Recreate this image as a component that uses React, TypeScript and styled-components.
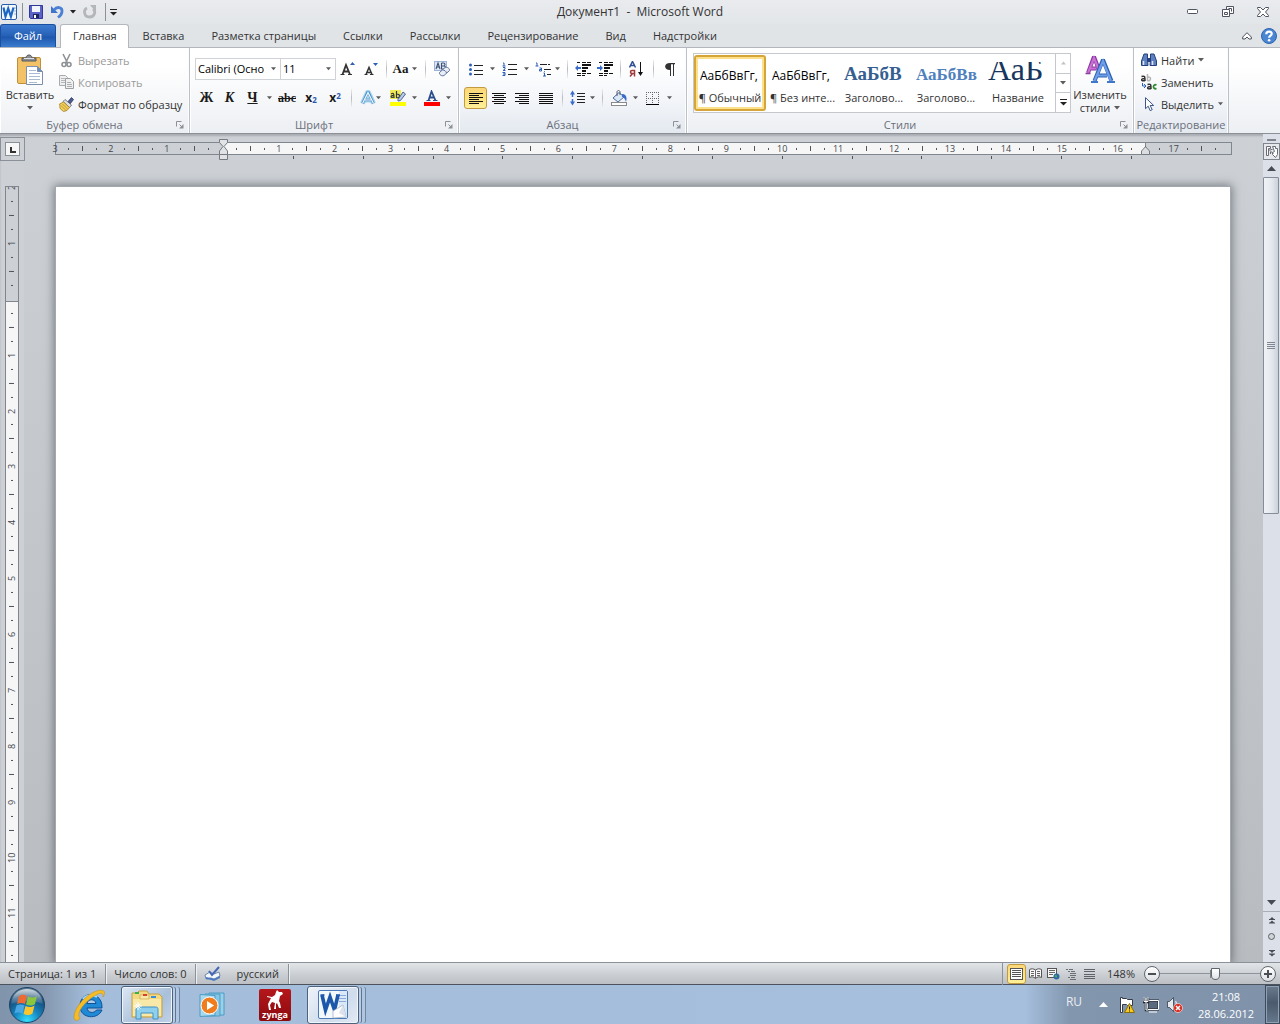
import React from "react";
import styled, { createGlobalStyle, css } from "styled-components";

const GlobalStyle = createGlobalStyle`
  * { box-sizing: border-box; }
  html, body { margin: 0; height: 100%; overflow: hidden; }
  body, button, select, input, textarea {
    font-family: "Open Sans", "Noto Sans", sans-serif;
    font-size: 11px;
    color: #333;
  }
  button {
    border: 0; padding: 0; margin: 0; background: none; cursor: default;
    display: flex; align-items: center; justify-content: center; flex: none;
  }
  svg { display: block; flex: none; }
`;

/* ---------- window frame ---------- */

const Window = styled.div`
  display: flex;
  flex-direction: column;
  height: 100vh;
  background: #cdd1d6;
`;

const TitleBar = styled.header`
  display: grid;
  grid-template-columns: 1fr auto 1fr;
  align-items: center;
  height: 24px;
  background: linear-gradient(#e9ebee, #e3e6e9);
`;

const Title = styled.h1`
  margin: 0;
  font-size: 12px;
  font-weight: 400;
  line-height: 16px;
  white-space: pre;
`;

const QuickAccess = styled.div`
  display: flex;
  align-items: center;
`;

const WindowButtons = styled.div`
  display: flex;
  justify-content: flex-end;
`;

const Tool = styled.button<{ $w?: number }>`
  width: ${(p) => p.$w ?? 24}px;
  height: 22px;
`;

const Divider = styled.span<{ $w?: number; $dark?: boolean }>`
  flex: none;
  width: ${(p) => p.$w ?? 8}px;
  height: 18px;
  background: linear-gradient(${(p) => (p.$dark ? "#8d9299, #8d9299" : "#eceef0, #b5bac1, #eceef0")}) center / 1px 100% no-repeat;
`;

const TabRow = styled.nav`
  display: flex;
  align-items: flex-end;
  height: 24px;
  background: #e0e4e7;
  border-bottom: 1px solid #b4b8be;
`;

const TabButton = styled.button`
  height: 23px;
  padding: 0 13px 0 14px;
  line-height: 16px;
`;

const FileTab = styled(TabButton)`
  width: 56px;
  margin-right: 4px;
  padding: 0;
  color: #fff;
  border: 1px solid #1b4f9f;
  border-bottom: 0;
  border-radius: 3px 3px 0 0;
  background: linear-gradient(#3d7bd0, #2560b5 50%, #1e57ad 55%, #3a7dd0);
`;

const ActiveTab = styled(TabButton)`
  height: 24px;
  margin-bottom: -1px;
  padding: 0 11px 2px 12px;
  background: #fff;
  border: 1px solid #b4b8be;
  border-bottom: 0;
  border-radius: 3px 3px 0 0;
`;

const TabActions = styled.div`
  display: flex;
  margin-left: auto;
`;

/* ---------- ribbon ---------- */

const Ribbon = styled.div`
  display: flex;
  flex: none;
  height: 86px;
  background: linear-gradient(#fff 20%, #f6f7f9 60%, #eceff3);
  border-bottom: 1px solid #8b9097;
`;

const Group = styled.section<{ $w: number; $tinted?: boolean }>`
  display: flex;
  flex-direction: column;
  flex: none;
  width: ${(p) => p.$w}px;
  border-right: 1px solid #bcc1c8;
  box-shadow: inset -1px 0 #fbfcfd, inset 1px 0 #fff;
  ${(p) => p.$tinted && css`background: linear-gradient(#fff 20%, #f3f5f9 60%, #e4e9f0);`}
`;

const GroupBody = styled.div<{ $left?: number }>`
  display: flex;
  flex: 1;
  gap: 4px;
  padding-left: ${(p) => p.$left ?? 5}px;
`;

const GroupFooter = styled.div`
  display: grid;
  grid-template-columns: 1fr 20px;
  align-items: center;
  height: 16px;
`;

const GroupTitle = styled.h2<{ $wide?: boolean }>`
  grid-column: ${(p) => (p.$wide ? "1 / 3" : "1")};
  margin: 0;
  font-size: 11px;
  font-weight: 400;
  line-height: 16px;
  text-align: center;
  color: #6b6f7a;
  white-space: nowrap;
`;

const Launcher = styled.button`
  justify-self: end;
  width: 14px;
  height: 14px;
  margin-right: 2px;
`;

const Rows = styled.div`
  display: flex;
  flex-direction: column;
  gap: 7px;
  padding-top: 10px;
`;

const Row = styled.div`
  display: flex;
  align-items: center;
  height: 22px;
`;

const SmallColumn = styled.div`
  display: flex;
  flex-direction: column;
  padding-top: 1px;
`;

const SmallButton = styled.button`
  height: 22px;
  justify-content: flex-start;
  gap: 4px;
  white-space: nowrap;
  &:disabled { color: #9a9a9a; }
`;

const BigButton = styled.button`
  flex-direction: column;
  justify-content: flex-start;
  width: 50px;
  padding-top: 4px;
  line-height: 13px;
  white-space: nowrap;
`;

const BigIcon = styled.span`
  display: flex;
  align-items: center;
  height: 36px;
`;

const Inline = styled.span`
  display: flex;
  align-items: center;
  gap: 4px;
  min-height: 13px;
`;

const Combo = styled.div<{ $w: number }>`
  position: relative;
  width: ${(p) => p.$w}px;
  height: 22px;
  border: 1px solid #cfd2d7;
  background: #fff;
  & + & { margin-left: -1px; }
  svg { position: absolute; right: 4px; top: 8px; pointer-events: none; }
`;

const Select = styled.select`
  appearance: none;
  width: 100%;
  height: 20px;
  padding: 0 0 2px 2px;
  border: 0;
  background: transparent;
  color: #000;
`;

const ToggleTool = styled(Tool)<{ $on?: boolean }>`
  ${(p) => p.$on && css`
    border: 1px solid #c29b3f;
    border-radius: 3px;
    background: linear-gradient(#fbd77a, #fde27f 50%, #fff09a);
  `}
`;

const Glyph = styled.span<{ $italic?: boolean; $line?: string; $size?: number }>`
  font-family: "Liberation Serif", serif;
  font-size: ${(p) => p.$size ?? 14}px;
  font-weight: 700;
  line-height: 16px;
  color: #1a1a1a;
  font-style: ${(p) => (p.$italic ? "italic" : "normal")};
  text-decoration: ${(p) => p.$line ?? "none"};
`;

const Script = styled.span<{ $up?: boolean }>`
  display: flex;
  align-items: ${(p) => (p.$up ? "flex-start" : "flex-end")};
  font: 700 12px/12px "Open Sans", sans-serif;
  color: #1a1a1a;
  small { font-size: 8px; line-height: 8px; color: #2a56b0; }
`;

const Gallery = styled.div`
  display: flex;
  width: 378px;
  height: 60px;
  margin-top: 5px;
  border: 1px solid #c5c9ce;
  background: #fff;
`;

const StyleCard = styled.button<{ $on?: boolean }>`
  flex-direction: column;
  justify-content: flex-end;
  align-items: stretch;
  width: 72px;
  height: 56px;
  margin-top: 1px;
  padding: 0 2px 1px;
  border: 2px solid transparent;
  ${(p) => p.$on && css`
    border-color: #d6a53a;
    border-radius: 3px;
    box-shadow: inset 0 0 0 2px #fce08a;
  `}
`;

const Preview = styled.span`
  display: block;
  height: 28px;
  margin-left: 2px;
  overflow: hidden;
  white-space: nowrap;
  text-align: left;
  font-size: 12px;
  line-height: 28px;
`;

const Sample = styled.span<{ $size: number; $color: string; $serif?: boolean; $bold?: boolean }>`
  font-family: ${(p) => (p.$serif ? '"Liberation Serif", serif' : '"Open Sans", sans-serif')};
  font-size: ${(p) => p.$size}px;
  font-weight: ${(p) => (p.$bold ? 700 : 400)};
  line-height: 0;
  color: ${(p) => p.$color};
`;

const StyleName = styled.span`
  line-height: 16px;
  height: 18px;
  text-align: center;
  white-space: nowrap;
`;

const GalleryScroll = styled.div`
  display: flex;
  flex-direction: column;
  margin-left: auto;
  width: 15px;
  border-left: 1px solid #c5c9ce;
`;

const GalleryButton = styled.button`
  flex: 1;
  & + & { border-top: 1px solid #c5c9ce; }
`;

/* ---------- workspace ---------- */

const Workspace = styled.main`
  display: flex;
  flex: 1;
  min-height: 0;
  box-shadow: inset 0 2px 2px #a9adb3;
`;

const LeftRail = styled.div`
  display: flex;
  flex-direction: column;
  width: 24px;
  padding-top: 3px;
`;

const TabStop = styled.button`
  width: 25px;
  height: 24px;
  border: 1px solid #8a9097;
  background: #cdd1d6;
  span { display: flex; border: 1px solid #8a9097; background: #f7f7f8; padding: 4px 3px 2px 4px; }
`;

const VRuler = styled.div`
  display: flex;
  flex-direction: column;
  flex: 1;
  width: 14px;
  min-height: 0;
  margin: 25px 0 0 5px;
  border: 1px solid #7f868e;
  border-bottom: 0;
  background: linear-gradient(#cdd1d6 114px, #7f868e 114px, #7f868e 115px, #f6f6f7 115px);
  overflow: hidden;
`;

const VMarks = styled.div`
  display: flex;
  flex-direction: column;
  flex: 1;
  margin-top: -7px;
`;

const HMarks = styled.div`
  position: absolute;
  inset: 0 8px 0 -8px;
  display: flex;
`;

const Mark = styled.span<{ $turn?: boolean }>`
  display: flex;
  flex: 1 1 0;
  min-width: 0;
  min-height: 0;
  align-items: center;
  justify-content: center;
  font-size: 9px;
  line-height: 10px;
  color: #42464c;
  ${(p) => p.$turn && css`
    writing-mode: vertical-rl;
    transform: rotate(180deg);
  `}
`;

const Tick = styled.i<{ $long?: boolean; $turn?: boolean }>`
  flex: none;
  background: #50545a;
  width: ${(p) => (p.$turn ? (p.$long ? 5 : 2) : 1)}px;
  height: ${(p) => (p.$turn ? 1 : p.$long ? 5 : 2)}px;
`;

const Center = styled.div`
  display: flex;
  flex-direction: column;
  flex: 1;
  min-width: 0;
  overflow: hidden;
  background: linear-gradient(rgba(205, 209, 214, 0), #b8bbbf);
`;

const HRuler = styled.div`
  position: relative;
  display: flex;
  flex: none;
  height: 13px;
  margin: 8px 31px 0;
  border: 1px solid #7f868e;
`;

const TextSpan = styled.div`
  flex: 1;
  margin: 0 85px 0 167px;
  background: #f6f6f7;
  border-right: 1px solid #7f868e;
`;

const LeftIndent = styled.div`
  position: absolute;
  left: 163px;
  top: -4px;
`;

const RightIndent = styled.div`
  position: absolute;
  right: 81px;
  top: 3px;
`;

const TabStops = styled.div`
  display: flex;
  flex: none;
  height: 3px;
  margin: 1px 131px 0 200px;
  i { flex: 1; border-right: 1px solid #50545a; }
`;

const Page = styled.textarea`
  flex: 1;
  margin: 28px 33px 0 32px;
  padding: 96px 84px 0 168px;
  border: 0;
  outline: 0;
  resize: none;
  background: #fff;
  box-shadow: 0 0 0 1px #a3a8ae, 0 0 9px 2px rgba(60, 66, 74, 0.6);
`;

const ScrollRail = styled.div`
  display: flex;
  flex-direction: column;
  width: 17px;
  padding-top: 5px;
  background: #dce1e9;
`;

const SplitHandle = styled.div`
  height: 3px;
  margin: 0 4px 1px;
  border-top: 2px solid #7f868e;
`;

const RailButton = styled.button<{ $boxed?: boolean; $line?: boolean }>`
  width: 17px;
  height: 17px;
  ${(p) => p.$boxed && css`border: 1px solid #7f868e; background: #e6e8eb;`}
  ${(p) => p.$line && css`border-top: 1px solid #a9afb8;`}
`;

const Track = styled.div`
  flex: 1;
`;

const Thumb = styled.div`
  display: flex;
  align-items: center;
  justify-content: center;
  width: 16px;
  height: 47%;
  border: 1px solid #858d98;
  border-radius: 1px;
  background: linear-gradient(90deg, #f0f2f5, #e6eaf0 50%, #ccd1da);
`;

/* ---------- status bar ---------- */

const StatusBar = styled.footer`
  display: flex;
  align-items: center;
  flex: none;
  height: 23px;
  border-top: 1px solid #8b9199;
  border-bottom: 1px solid #4c535c;
  background: linear-gradient(#e2e5e8, #c9cdd1 60%, #bcc0c5);
`;

const StatusItem = styled.button`
  height: 20px;
  padding: 0 9px 1px 8px;
  border-right: 1px solid #8b9199;
  box-shadow: 1px 0 #eef0f2;
`;

const ViewButtons = styled.div`
  display: flex;
  align-items: center;
  margin-left: auto;
  padding-left: 4px;
  border-left: 1px solid #8b9199;
`;

const ViewButton = styled(ToggleTool)`
  height: 20px;
  margin: 1px 0;
`;

const ZoomButton = styled.button`
  width: 16px;
  height: 16px;
  border-radius: 8px;
  border: 1px solid #60666e;
  background: linear-gradient(#fff, #dcdfe3);
`;

const ZoomGroup = styled.div`
  display: flex;
  align-items: center;
  padding-right: 4px;
`;

const ZoomValue = styled.button`
  width: 46px;
`;

const ZoomSlider = styled.input`
  appearance: none;
  width: 100px;
  height: 16px;
  margin: 0;
  background:
    linear-gradient(#7d838b, #7d838b) center / 1px 8px no-repeat,
    linear-gradient(#8d939b, #8d939b) center / 100% 1px no-repeat;
  &::-webkit-slider-thumb {
    appearance: none;
    width: 9px;
    height: 12px;
    border: 1px solid #60666e;
    border-radius: 1px 1px 5px 5px;
    background: linear-gradient(#fff, #e0e3e7);
  }
`;

/* ---------- taskbar ---------- */

const Taskbar = styled.nav`
  display: flex;
  flex: none;
  align-items: stretch;
  height: 39px;
  background: linear-gradient(90deg, #8094ab 0, #8598b0 45px, #a3bddb 90px, #a6bfdd calc(100% - 255px), #8296ae calc(100% - 210px), #7f92aa);
`;

const StartButton = styled.button`
  width: 54px;
  margin-right: 5px;
`;

const TaskList = styled.div`
  display: flex;
  flex: 1;
  gap: 2px;
`;

const TaskButton = styled.button<{ $open?: boolean; $active?: boolean }>`
  width: 60px;
  ${(p) => p.$open && css`
    justify-content: flex-start;
    & > span {
      display: flex;
      align-items: center;
      justify-content: center;
      width: 52px;
      height: 38px;
      border: 1px solid #4d627c;
      border-radius: 3px;
      background: ${p.$active ? "linear-gradient(135deg, #eef3f9, #cfdcec 60%, #e2eaf4)" : "linear-gradient(135deg, #dce7f3, #a9bfda 60%, #c2d2e6)"};
      box-shadow: inset 0 0 0 1px #f0f5fb, 3px 0 0 -1px #b9cce3, 4px 0 0 -1px #5e7592, 7px 0 0 -1px #b0c6e0, 8px 0 0 -1px #6f87a5;
    }
  `}
`;

const Tray = styled.div`
  display: flex;
  align-items: center;
`;

const Language = styled.button`
  width: 34px;
  padding-bottom: 6px;
  font-size: 12px;
  color: #e8edf3;
`;

const Clock = styled.time`
  width: 78px;
  color: #fff;
  text-align: center;
  line-height: 17px;
`;

const ShowDesktop = styled.button`
  align-self: stretch;
  width: 15px;
  border: 1px solid #3c4a5b;
  background: linear-gradient(#6b7b8e, #4b5a6c 45%, #66788d);
  box-shadow: inset 0 0 0 1px #8fa0b4;
`;

/* ---------- icons ---------- */

const Arrow = ({ color = "#5c5c5c", w = 6 }: { color?: string; w?: number }) => (
  <svg width={w} height="4" viewBox="0 0 6 4"><path d="M0 0h6L3 3.6z" fill={color} /></svg>
);

const WordSmall = () => (
  <svg width="18" height="18" viewBox="0 0 18 18">
    <rect x="1.5" y="1.5" width="15" height="15" rx="1.5" fill="#f3f8fd" stroke="#2a5ca8" />
    <path d="M14 5h2M14 8h2M14 11h2" stroke="#9bb7dd" />
    <path d="M3.500 4.500l2 9 2.700-8 2.700 8 2.600-9" fill="none" stroke="#1c66c4" strokeWidth="2.200" />
  </svg>
);

const Save = () => (
  <svg width="14" height="14" viewBox="0 0 14 14">
    <path d="M.5.5h13v13h-12l-1-1z" fill="#5a63c8" stroke="#31389a" />
    <path d="M3 1h8v6H3z" fill="#f2f5fb" /><path d="M4 9h6v4H4z" fill="#20265c" /><path d="M5 10h2v3H5z" fill="#fff" />
  </svg>
);

const Undo = () => (
  <svg width="14" height="14" viewBox="0 0 14 14">
    <path d="M1 1v7h7z" fill="#3f74cc" />
    <path d="M4 5c3-4 8.500-3 8 1.500 0 2.500-2 4.500-4 6" fill="none" stroke="#4b80d4" strokeWidth="2.800" />
  </svg>
);

const Redo = () => (
  <svg width="14" height="14" viewBox="0 0 14 14">
    <path d="M4 3C0 5 1 12 6.500 12S13 6 10 4" fill="none" stroke="#b3b6ba" strokeWidth="2.800" />
    <path d="M7 0h6v7z" fill="#b3b6ba" />
  </svg>
);

const Customize = () => (
  <svg width="7" height="7" viewBox="0 0 7 7"><path d="M0 .5h7" stroke="#222" /><path d="M0 3h7L3.500 6.500z" fill="#222" /></svg>
);

const Minimize = () => (
  <svg width="12" height="6" viewBox="0 0 12 6"><rect x=".5" y=".5" width="10" height="4" rx="1" fill="#fff" stroke="#4f5362" /></svg>
);

const Restore = () => (
  <svg width="12" height="12" viewBox="0 0 12 12">
    <path d="M4.500 .5h7v7h-7z" fill="#fff" stroke="#4f5362" /><path d="M.5 3.500h7v7h-7z" fill="#fff" stroke="#4f5362" />
    <path d="M2.500 6.500h3v2h-3z" fill="none" stroke="#4f5362" /><path d="M6.500 2.500h3v3" fill="none" stroke="#4f5362" />
  </svg>
);

const Close = () => (
  <svg width="12" height="10" viewBox="0 0 12 10">
    <path d="M.5.5h3L6 3 8.500.5h3v1L8.500 5l3 3.500v1h-3L6 7 3.500 9.500h-3v-1L3.500 5l-3-3.500z" fill="#fff" stroke="#4f5362" />
  </svg>
);

const Collapse = () => (
  <svg width="10" height="8" viewBox="0 0 10 8"><path d="M5 .7L9.300 5v2H7L5 5 3 7H.7V5z" fill="#fff" stroke="#4f5362" /></svg>
);

const Help = () => (
  <svg width="16" height="16" viewBox="0 0 16 16">
    <circle cx="8" cy="8" r="7.500" fill="#4a86d2" stroke="#2f64b0" />
    <path d="M5.300 6.200C5.300 2.700 10.900 2.900 10.700 6c-.1 1.700-2.600 1.700-2.600 3.800" fill="none" stroke="#fff" strokeWidth="2.200" />
    <circle cx="8.100" cy="12.200" r="1.300" fill="#fff" />
  </svg>
);

const Paste = () => (
  <svg width="28" height="32" viewBox="0 0 28 32">
    <rect x="1.500" y="3.500" width="23" height="26" rx="1.500" fill="#f3c267" stroke="#c08f3c" />
    <path d="M6 7V4h4c0-4 6-4 6 0h4v3z" fill="#8b8f94" stroke="#55595e" /><path d="M8 4.500h10" stroke="#dfe2e5" />
    <path d="M10.500 12.500h11l5 5v13h-16z" fill="#fff" stroke="#7c90ad" /><path d="M21.500 12.500v5h5z" fill="#6d8fc0" stroke="#7c90ad" />
    <path d="M13 16.500h7M13 19.500h11M13 22.500h11M13 25.500h11M13 28.500h8" stroke="#a9bad3" />
  </svg>
);

const Cut = () => (
  <svg width="15" height="15" viewBox="0 0 15 15">
    <path d="M4 1l4.500 9M11 1L6.500 10" stroke="#8e9195" strokeWidth="1.600" />
    <circle cx="5" cy="11.500" r="2" fill="none" stroke="#8e9195" strokeWidth="1.600" /><circle cx="10" cy="11.500" r="2" fill="none" stroke="#8e9195" strokeWidth="1.600" />
  </svg>
);

const Copy = () => (
  <svg width="15" height="14" viewBox="0 0 15 14">
    <path d="M.5.5h6l2 2v8h-8z" fill="#eee" stroke="#a9abae" /><path d="M2 3.500h4M2 5.500h4M2 7.500h4" stroke="#b5b7ba" />
    <path d="M6.500 3.500h5l3 3v7h-8z" fill="#f0f0f0" stroke="#9da0a3" /><path d="M8 7.500h4M8 9.500h5M8 11.500h5" stroke="#abadb0" />
  </svg>
);

const Brush = () => (
  <svg width="15" height="15" viewBox="0 0 15 15">
    <path d="M9 4.500L12.500 .500l2 2L11 7z" fill="#4c5a8c" stroke="#2f3b66" strokeWidth=".8" />
    <path d="M6 2.500l6.500 5.500-2 2.500-6.500-6z" fill="#dde0e4" stroke="#55595f" strokeWidth=".8" />
    <path d="M4.500 5L.5 7c1 1.500-.5 3 1 5l3 2.500 3.500-1 2.500-3z" fill="#f0cf5a" stroke="#a67e24" strokeWidth=".8" />
    <path d="M2 8.500l5 5M3.500 7l5 5" stroke="#b58d2e" strokeWidth=".8" />
  </svg>
);

const LauncherIcon = () => (
  <svg width="8" height="8" viewBox="0 0 8 8"><path d="M.5 5.500v-5h5M3.500 3.500l3 3" fill="none" stroke="#8c9096" /><path d="M7.500 3v4.500H3z" fill="#8c9096" /></svg>
);

const Eraser = () => (
  <svg width="17" height="16" viewBox="0 0 17 16">
    <rect x=".5" y=".5" width="12" height="9" fill="#dce8f8" stroke="#9db4d8" />
    <path d="M2 8l2-6 2 6M2.700 6h2.600M7.500 2v6h2.500c2 0 2-3 0-3H7.500M7.500 2H9.500c2 0 2 3 0 3" fill="none" stroke="#40506e" strokeWidth="1.100" />
    <path d="M5.500 11.500l5.500-5c2-1 5 1 4.500 3l-5.500 5c-2.500 1-5-1-4.500-3z" fill="#e9eef6" stroke="#5b729b" /><path d="M8.500 9c2 0 3.500 1 4 3" fill="none" stroke="#5b729b" />
  </svg>
);

const GlowA = () => (
  <svg width="16" height="16" viewBox="0 0 16 16">
    <path d="M2.500 13.500L7.500 2.500h1l5 11M4.500 10h7" fill="none" stroke="#a8d4ef" strokeWidth="5" strokeLinejoin="round" />
    <path d="M2.500 13.500L7.500 2.500h1l5 11M5 10h6" fill="none" stroke="#4d90c8" strokeWidth="2.600" /><path d="M2.500 13.500L8 2.500l5.500 11M5 10h6" fill="none" stroke="#f2fafe" strokeWidth="1.200" />
  </svg>
);

const Highlighter = () => (
  <svg width="16" height="16" viewBox="0 0 16 16">
    <rect width="11" height="9" fill="#f0ea55" />
    <path d="M1 4c3-1.500 3 0 3 4M4 5.500c-4-.5-4 3 0 1.500M6.500 1v7M6.500 4.500c4-1.500 4 4.500 0 3" fill="none" stroke="#32373f" strokeWidth="1.200" />
    <path d="M8 9.500L13 2l2.500 2L10.500 10.500 8 11z" fill="#b9cbe6" stroke="#4a6698" /><rect y="12" width="16" height="4" fill="#ff0" />
  </svg>
);

const FontColor = () => (
  <svg width="16" height="16" viewBox="0 0 16 16">
    <path d="M4.500 10.500L7.500 1.500l4 9M5.500 7.500h5" fill="none" stroke="#2d4e8c" strokeWidth="1.800" /><path d="M2.500 10.500h4M9 10.500h4.500" stroke="#2d4e8c" />
    <rect y="12" width="16" height="4" fill="red" />
  </svg>
);

const lineRows = (rows: Array<[number, number]>) => rows.map(([x, w], i) => `M${x} ${i * 2 + 0.5}h${w}`).join("");

const Align = ({ kind }: { kind: "left" | "center" | "right" | "full" }) => {
  const long = 14, short = 10;
  const rows = [0, 1, 2, 3, 4, 5].map((i): [number, number] => {
    const w = kind === "full" || i % 2 === 0 ? long : short;
    return [kind === "right" ? long - w : kind === "center" ? (long - w) / 2 : 0, w];
  });
  return <svg width="14" height="11" viewBox="0 0 14 11"><path d={lineRows(rows)} stroke="#111" /></svg>;
};

const Bullets = () => (
  <svg width="14" height="13" viewBox="0 0 14 13">
    <path d="M5 2.500h9M5 7.500h9M5 11.500h9" stroke="#222" /><g fill="#2c5fb8"><circle cx="1.500" cy="2" r="1.500" /><circle cx="1.500" cy="6.500" r="1.500" /><circle cx="1.500" cy="11" r="1.500" /></g>
  </svg>
);

const Numbering = () => (
  <svg width="15" height="14" viewBox="0 0 15 14">
    <path d="M6 2.500h9M6 7.500h9M6 12.500h9" stroke="#222" />
    <path d="M1 1h1v3M.5 4h3M1 5.500h2v1.500L1 8.500h2.500M.5 10.500H3v3H.5M1 12h2" fill="none" stroke="#2c5fb8" />
  </svg>
);

const Multilevel = () => (
  <svg width="16" height="15" viewBox="0 0 16 15">
    <path d="M5 2.500h10M9 7.500h7M12 12.500h4" stroke="#222" strokeDasharray="7 1" />
    <path d="M1 1h1v3M.5 4h3M4.500 6h2v3h-2V7.500h2M9.500 9v.8M8.500 11h1v3M8 14h3" fill="none" stroke="#2c5fb8" />
  </svg>
);

const Indent = ({ inward }: { inward?: boolean }) => (
  <svg width="16" height="14" viewBox="0 0 16 14">
    <path d="M2 .5h3M7 .5h9M2 11.500h4M2 13.500h4M7 11.500h9M7 13.500h3" stroke="#111" strokeDasharray="4 1" />
    <path d="M7 3h9M7 6h6M7 9h4" stroke="#111" strokeWidth="2" />
    {inward ? <path d="M6 6L3 3v2H0v2h3v2z" fill="#3a6dcb" /> : <path d="M0 6l3-3v2h3v2H3v2z" fill="#3a6dcb" />}
  </svg>
);

const Sort = () => (
  <svg width="14" height="16" viewBox="0 0 14 16">
    <path d="M.5 6.500L3.500 .5l3 6M1.500 4.500h4" fill="none" stroke="#2f4f92" strokeWidth="1.500" />
    <path d="M5.500 15.500v-6H3c-2 0-2 3 0 3h2.500M3.500 12.500l-2.500 3" fill="none" stroke="#a03a3a" strokeWidth="1.500" />
    <path d="M11.500 1v12" stroke="#111" /><path d="M9 11h5L11.500 15z" fill="#111" />
  </svg>
);

const Pilcrow = () => (
  <svg width="10" height="13" viewBox="0 0 10 13"><path d="M5 0h5v1.200H9V13H8V1.200H6V13H5V7C-1.500 7-1.500 0 5 0z" fill="#333" /></svg>
);

const Spacing = () => (
  <svg width="16" height="16" viewBox="0 0 16 16">
    <path d="M7 3.500h8M7 6.500h8M7 9.500h8M7 12.500h8" stroke="#222" />
    <path d="M2.500 3v4M2.500 9v4" stroke="#3a6dcb" strokeWidth="1.500" /><path d="M0 4.500L2.500 .5l2.500 4zM0 11.500l2.500 4 2.500-4z" fill="#3a6dcb" />
  </svg>
);

const Bucket = () => (
  <svg width="16" height="16" viewBox="0 0 16 16">
    <path d="M2 8l6-5.500 5 4.500-6 5z" fill="#dbe7f5" stroke="#4a6a9c" /><path d="M6 6V2c0-2 3-2 3 0v3" fill="none" stroke="#555e70" /><path d="M11 4c4 0 5.500 3 4 8-1-3-2-5-4-5z" fill="#3a6dcb" />
    <rect x=".5" y="12.500" width="15" height="3" fill="#fff" stroke="#8a8a8a" />
  </svg>
);

const Borders = () => (
  <svg width="13" height="13" viewBox="0 0 13 13"><path d="M.5 0v12M6.500 0v12M12.500 0v12M0 .5h13M0 6.500h13" stroke="#666" strokeDasharray="1 1" /><path d="M0 12.500h13" stroke="#000" /></svg>
);

const ChangeStyles = () => (
  <svg width="30" height="30" viewBox="0 0 30 30">
    <path d="M3 18L8.500 3h1l4.500 12M4.500 13.500h7" fill="none" stroke="#8a3ba0" strokeWidth="4" /><path d="M3 18L9 3l5 12M4.500 13.500h7" fill="none" stroke="#c96fd6" strokeWidth="2.200" />
    <path d="M9.500 26L17.500 6h1L26.500 26M12 20.500h10" fill="none" stroke="#2e62b4" strokeWidth="4" /><path d="M9.500 26L18 6l8 20M12 20.500h10" fill="none" stroke="#6da0e8" strokeWidth="2.200" />
    <path d="M6 27h7M22 27h8" stroke="#3f78c8" strokeWidth="2" /><path d="M.5 18.500h5" stroke="#8a3ba0" strokeWidth="1.500" />
  </svg>
);

const Binoculars = () => (
  <svg width="16" height="14" viewBox="0 0 16 14">
    <path d="M3 1h3.500v4L7 12.500H.500V8zM13 1H9.500v4L9 12.500h6.500V8z" fill="#5f7fc0" stroke="#24407c" /><path d="M6 5h4v4H6z" fill="#24407c" />
    <path d="M2.500 8v4M11.500 8v4" stroke="#dce6f6" strokeWidth="1.500" />
  </svg>
);

const Replace = () => (
  <svg width="16" height="16" viewBox="0 0 16 16">
    <path d="M.5 2.500c3.500-1 3.500 0 3.500 4.500M4 4.500c-4.500-.5-4.500 3.500 0 2" fill="none" stroke="#333" strokeWidth="1.500" />
    <path d="M6.500 0v7M6.500 3.500c4-2 4 4.500 0 3" fill="none" stroke="#b5b5b5" strokeWidth="1.500" />
    <path d="M1.500 9v3h3M3 10l2 2-2 2" fill="none" stroke="#2c5fb8" />
    <path d="M6.500 10.500c3.500-1 3.500 0 3.500 4.500M10 12.500c-4.500-.5-4.500 3.500 0 2" fill="none" stroke="#333" strokeWidth="1.500" />
    <path d="M15.500 11c-4-1.500-4 5 0 3.500" fill="none" stroke="#2b8a2b" strokeWidth="1.800" />
  </svg>
);

const Cursor = () => (
  <svg width="16" height="15" viewBox="0 0 16 15"><path d="M4.500.7v11l2.700-2.500 2 4.500 2-1-2-4.200h3.500z" fill="#fff" stroke="#3b5687" /></svg>
);

const IndentMarker = () => (
  <svg width="9" height="21" viewBox="0 0 9 21">
    <path d="M.5.5h8v3L5 7.500 8.500 12v3.500h-8V12L4 7.500.500 3.500z" fill="#e2e3e5" stroke="#767b82" /><path d="M.5 15.500h8v5h-8z" fill="#e2e3e5" stroke="#767b82" />
  </svg>
);

const RightMarker = () => (
  <svg width="9" height="9" viewBox="0 0 9 9"><path d="M4.500.7L8.500 5v3.500h-8V5z" fill="#dcdde0" stroke="#767b82" /></svg>
);

const RulerToggle = () => (
  <svg width="12" height="12" viewBox="0 0 12 12">
    <path d="M.5.5h4v2h-2v7h-2zM6.500 .500h3v2h2v6l-2 3-3-3v-2l2-1z" fill="#fff" stroke="#686d75" /><path d="M2.500 3l5 5M4.500 3.500h2M4.500 6v2" stroke="#686d75" />
  </svg>
);

const Up = ({ color = "#484c52" }: { color?: string }) => (
  <svg width="9" height="5" viewBox="0 0 9 5"><path d="M0 5h9L4.500 0z" fill={color} /></svg>
);
const SmallUp = () => (
  <svg width="5" height="4" viewBox="0 0 5 4"><path d="M0 3.500h5L2.500 .5z" fill="#c0c4c9" /></svg>
);
const Down = () => (
  <svg width="9" height="5" viewBox="0 0 9 5"><path d="M0 0h9L4.500 5z" fill="#484c52" /></svg>
);
const DoubleArrow = ({ down }: { down?: boolean }) => (
  <svg width="6" height="7" viewBox="0 0 6 7">
    <path d={down ? "M0 0h6v1H5L3 3 1 1H0zM0 3.500h6v1H5l-2 2-2-2H0z" : "M3 0l2 2h1v1H0V2h1zM3 3.500l2 2h1v1H0v-1h1z"} fill="#484c52" />
  </svg>
);
const Ring = () => (
  <svg width="7" height="7" viewBox="0 0 7 7"><circle cx="3.500" cy="3.500" r="3" fill="#d0d3d8" stroke="#5b6067" /></svg>
);
const Grip = () => (
  <svg width="8" height="7" viewBox="0 0 8 7"><path d="M0 .5h8M0 2.500h8M0 4.500h8M0 6.500h8" stroke="#7f8691" /></svg>
);

const Spell = () => (
  <svg width="17" height="15" viewBox="0 0 17 15">
    <path d="M1 9l5-3 4 2 5-2 1 4-6 3-3-1-5 1z" fill="#f4f7fb" stroke="#7188ab" /><path d="M2 11l5 1 3 1 6-3v2l-6 3-3-1-5-1z" fill="#4c79bf" />
    <path d="M5 5l3 4 7-8" fill="none" stroke="#4467b5" strokeWidth="2" />
  </svg>
);

const ViewIcon = ({ kind }: { kind: "print" | "read" | "web" | "outline" | "draft" }) => (
  <svg width="13" height="12" viewBox="0 0 13 12">
    {kind === "print" && <><rect x=".5" y=".5" width="12" height="11" fill="#fff" stroke="#555" /><path d="M2 2.500h9M2 4.500h9M2 6.500h9M2 8.500h9" stroke="#555" /></>}
    {kind === "read" && <><path d="M.5 1.500c2-1 4-1 6 .5 2-1.500 4-1.500 6-.5v8c-2-1-4-1-6 1-2-2-4-2-6-1z" fill="#f7f7f7" stroke="#555" /><path d="M6.500 2v8M2 3.500h3M2 5.500h3M2 7.500h3M8 3.500h3M8 5.500h3M8 7.500h3" stroke="#666" /></>}
    {kind === "web" && <><rect x=".5" y=".5" width="9" height="9" fill="#f7f7f7" stroke="#555" /><path d="M2 2.500h6M2 4.500h6M2 6.500h4" stroke="#666" /><circle cx="9.500" cy="8.500" r="3" fill="#2b6ba8" /><path d="M8 7l2 .5v2l-2-.5z" fill="#5ca74c" /></>}
    {kind === "outline" && <path d="M1 1.500h2M4 1.500h4M3 3.500h2M6 3.500h4M5 5.500h6M5 7.500h6M3 9.500h2M6 9.500h4M5 11.500h6" stroke="#6b6f75" />}
    {kind === "draft" && <path d="M1 1.500h11M1 3.500h11M1 6.500h11M1 8.500h11M1 10.500h11" stroke="#5f6369" />}
  </svg>
);

const Orb = () => (
  <svg width="38" height="38" viewBox="0 0 38 38">
    <defs>
      <radialGradient id="orb" cx=".5" cy=".95" r=".9"><stop offset="0" stopColor="#35e0ff" /><stop offset=".4" stopColor="#1787c2" /><stop offset=".8" stopColor="#174a77" /><stop offset="1" stopColor="#59788f" /></radialGradient>
      <linearGradient id="gloss" x2="0" y2="1"><stop stopColor="#fff" stopOpacity=".7" /><stop offset="1" stopColor="#fff" stopOpacity=".1" /></linearGradient>
    </defs>
    <circle cx="19" cy="19" r="17.500" fill="url(#orb)" stroke="#1d4467" />
    <path d="M3 18C4 8 11 3 19 3s15 5 16 15c-9-4-22-4-32 0z" fill="url(#gloss)" />
    <path d="M11 10c3-2 5-1.500 8 0l-2 8c-3-1.500-5-1.500-8 0z" fill="#ee6a35" /><path d="M20 10.500c3 1.500 6 1.500 9-.5l-2 8c-3 2-6 2-9 .5z" fill="#8cc63c" />
    <path d="M8.500 19.500c3-1.500 5-1.500 8 0l-2 8c-3-1.500-5-1.500-8 0z" fill="#4aa7e4" /><path d="M17.500 20c3 1.500 6 1.500 9-.5l-2 8c-3 2-6 2-9 .5z" fill="#fbc62d" />
  </svg>
);

const Explorer = () => (
  <svg width="32" height="30" viewBox="0 0 32 30">
    <path d="M1 27V3h5l2-2h8l2 3h10l3 3v20z" fill="#f3d981" stroke="#c7a045" /><path d="M2 9h28v17H2z" fill="#f9e9a9" />
    <path d="M9 5h9v4H9z" fill="#f9e9a9" stroke="#c7a045" strokeWidth=".6" /><path d="M4 2h4v2H4z" fill="#39b04a" /><path d="M12 4h4v2h-4z" fill="#d5432e" /><path d="M20 6h5v2h-5z" fill="#3a8fdc" />
    <path d="M5 29V20c0-3 1-3 3-3h16c3 0 3 1 3 3v9h-5v-6H10v6z" fill="#8fd0ee" stroke="#3f91c4" /><path d="M7 12v8M3 16h8M4.500 13.500l5 5M9.500 13.500l-5 5" stroke="#fff" />
  </svg>
);

const Internet = () => (
  <svg width="32" height="32" viewBox="0 0 32 32">
    <path d="M29 19H14c.5 5 7 6 9.500 2H29c-4 10-22 9-22-4C7 1 30 2 29 19z" fill="#1f8ad6" stroke="#124f96" /><path d="M14 14.500h9c-.5-5-8.500-5-9 0z" fill="#b0cce6" stroke="#124f96" />
    <path d="M10 10c3-4 10-5 14-2" stroke="#a6dcfa" strokeWidth="2" fill="none" />
    <path d="M2 31C-2 25 8 9 21 3c9-4 13-1 9 5 1-4-2-5-7-2C12 12 2 25 7 29c-1 2-3 3-5 2z" fill="#f4bd27" stroke="#c48a12" strokeWidth=".5" />
  </svg>
);

const Media = () => (
  <svg width="28" height="28" viewBox="0 0 28 28">
    <path d="M10 2h15v22H10z" fill="#9ad1ea" stroke="#4d9cc4" /><path d="M6 3h15v22H6z" fill="#86c5e4" stroke="#4d9cc4" /><path d="M1 3.500l15 1v20l-15 1z" fill="#a7d9ef" stroke="#4d9cc4" />
    <circle cx="10.500" cy="14.500" r="8.500" fill="#f07c1e" stroke="#fff" /><path d="M8 10v9l7-4.500z" fill="#fff" />
  </svg>
);

const ZyngaTile = styled.span`
  display: flex;
  flex-direction: column;
  align-items: center;
  justify-content: flex-end;
  width: 32px;
  height: 32px;
  padding-bottom: 1px;
  border-radius: 2px;
  background: linear-gradient(#b5171b, #8c0a0e);
  color: #fff;
  font-size: 9px;
  font-weight: 700;
  line-height: 10px;
`;

const Dog = () => (
  <svg width="18" height="20" viewBox="0 0 18 20">
    <path d="M1 6l5 1 3-2 1-3 1-2 2 2h3l1 2-3 2-1 5 1 2 1 5h-2l-2-5-1 1v5H8l1-6-3-1-2 3 1 5H3l-1-6 3-6-4-1z" fill="#fff" />
  </svg>
);

const WordBig = () => (
  <svg width="32" height="32" viewBox="0 0 32 32">
    <rect x="1.500" y="1.500" width="29" height="28" rx="1.500" fill="#f3f8fd" stroke="#4b7ab8" />
    <path d="M22 2h8v27h-8z" fill="#dbe8f6" /><path d="M22 6.500h7M22 9.500h7M22 12.500h7" stroke="#8bacd9" />
    <path d="M5 6l3.500 15 4.500-13 4.500 13L21 6" fill="none" stroke="#1d57ab" strokeWidth="3.600" />
    <path d="M3.500 6h4M19 6h4" stroke="#1d57ab" strokeWidth="1.500" />
    <path d="M16 22l10-6 3 12-13 1z" fill="#fdfdfe" stroke="#9aabc2" strokeWidth=".7" /><path d="M26 16l3 12-7-4z" fill="#dbe2ec" />
  </svg>
);

const Flag = () => (
  <svg width="16" height="16" viewBox="0 0 16 16">
    <path d="M1.500.5h2v1h4l1 1h5v6h-5l-1-1h-4v8h-2z" fill="#fff" stroke="#333c48" /><path d="M10.500 6.500l5 9h-10z" fill="#f7cb1e" stroke="#8a6d0c" /><path d="M10.500 9.500v3M10.500 13.500v1" stroke="#222" />
  </svg>
);

const Network = () => (
  <svg width="16" height="16" viewBox="0 0 16 16">
    <path d="M4.500 3.500h11v9h-11z" fill="#5a6b80" stroke="#20262e" strokeWidth="2" /><path d="M4.500 3.500h11v9h-11zM6 15h8" fill="none" stroke="#fff" />
    <path d="M1 1v4h4V1M3 4v9h2" fill="none" stroke="#20262e" strokeWidth="2.400" /><path d="M1 .500v4h4V.500M3 1v12h2" fill="none" stroke="#fff" />
  </svg>
);

const Speaker = () => (
  <svg width="16" height="16" viewBox="0 0 16 16">
    <path d="M.5 4.500h2l4-4v14l-4-4h-2z" fill="#e6e9ee" stroke="#333c48" strokeWidth=".8" /><path d="M8.500 4c1 1 1 3 0 5" stroke="#fff" fill="none" />
    <circle cx="11" cy="11" r="4.500" fill="#d9291c" stroke="#fff" strokeWidth=".6" /><path d="M9 9l4 4M13 9l-4 4" stroke="#fff" strokeWidth="1.500" />
  </svg>
);

const ResizeA = ({ down }: { down?: boolean }) => (
  <svg width="16" height="16" viewBox="0 0 16 16">
    {down
      ? <><path d="M3 13.500L6 6.500l3 7M4 11.500h4" fill="none" stroke="#333" strokeWidth="1.500" /><path d="M1.500 13.500h3M7 13.500h3.500" stroke="#333" /><path d="M10 2h5l-2.500 3z" fill="#2c5fb8" /></>
      : <><path d="M2.500 13.500L6 4l4 9.500M3.500 10.500H9" fill="none" stroke="#333" strokeWidth="1.800" /><path d="M.5 13.500h4M8 13.500h4" stroke="#333" /><path d="M10 4h5l-2.500-3z" fill="#2c5fb8" /></>}
  </svg>
);

/* ---------- composition ---------- */

const Footer = ({ title, launcher = true }: { title: string; launcher?: boolean }) => (
  <GroupFooter>
    <GroupTitle $wide={!launcher}>{title}</GroupTitle>
    {launcher && <Launcher aria-label={`${title}: параметры`}><LauncherIcon /></Launcher>}
  </GroupFooter>
);

const Menu = ({ label }: { label: string }) => <Tool $w={11} aria-label={label}><Arrow w={5} /></Tool>;

const marks = (labels: string[], turn: boolean) =>
  labels.flatMap((label, cm) => [0, 1, 2, 3].map((q) => (
    <Mark key={`${cm}-${q}`} $turn={turn}>
      {q === 0 ? label : <Tick $long={q === 2} $turn={turn} />}
    </Mark>
  )));

const range = (n: number) => Array.from({ length: n }, (_, i) => String(i + 1));
const H_LABELS = ["3", "2", "1", "", ...range(17)];
const V_LABELS = ["2", "1", "", ...range(11)];
const TABS = ["Вставка", "Разметка страницы", "Ссылки", "Рассылки", "Рецензирование", "Вид", "Надстройки"];
const STYLES = [
  { name: "¶ Обычный", sample: "АаБбВвГг,", size: 12, color: "#000" },
  { name: "¶ Без инте...", sample: "АаБбВвГг,", size: 12, color: "#000" },
  { name: "Заголово...", sample: "АаБбВ", size: 19, color: "#365f91", serif: true, bold: true },
  { name: "Заголово...", sample: "АаБбВв", size: 17, color: "#4f81bd", serif: true, bold: true },
  { name: "Название", sample: "АаБ", size: 32, color: "#17365d", serif: true },
];

export default function App() {
  return (
    <Window>
      <GlobalStyle />
      <TitleBar>
        <QuickAccess>
          <Tool $w={18} aria-label="Word"><WordSmall /></Tool>
          <Divider $dark />
          <Tool $w={20} aria-label="Сохранить"><Save /></Tool>
          <Tool $w={22} aria-label="Отменить"><Undo /></Tool>
          <Tool $w={10} aria-label="История отмены"><Arrow color="#222" /></Tool>
          <Tool $w={23} aria-label="Повторить"><Redo /></Tool>
          <Divider $dark />
          <Tool $w={8} aria-label="Настройка панели"><Customize /></Tool>
        </QuickAccess>
        <Title>{"Документ1  -  Microsoft Word"}</Title>
        <WindowButtons>
          <Tool $w={35} aria-label="Свернуть"><Minimize /></Tool>
          <Tool $w={35} aria-label="Восстановить"><Restore /></Tool>
          <Tool $w={35} aria-label="Закрыть"><Close /></Tool>
        </WindowButtons>
      </TitleBar>

      <TabRow>
        <FileTab>Файл</FileTab>
        <ActiveTab>Главная</ActiveTab>
        {TABS.map((t) => <TabButton key={t}>{t}</TabButton>)}
        <TabActions>
          <Tool $w={20} aria-label="Свернуть ленту"><Collapse /></Tool>
          <Tool $w={23} aria-label="Справка"><Help /></Tool>
        </TabActions>
      </TabRow>

      <Ribbon>
        <Group $w={190}>
          <GroupBody>
            <BigButton>
              <BigIcon><Paste /></BigIcon>
              <span>Вставить</span>
              <Inline><Arrow /></Inline>
            </BigButton>
            <SmallColumn>
              <SmallButton disabled><Cut />Вырезать</SmallButton>
              <SmallButton disabled><Copy />Копировать</SmallButton>
              <SmallButton><Brush />Формат по образцу</SmallButton>
            </SmallColumn>
          </GroupBody>
          <Footer title="Буфер обмена" />
        </Group>

        <Group $w={269}>
          <GroupBody>
            <Rows>
              <Row>
                <Combo $w={86}>
                  <Select aria-label="Шрифт"><option>Calibri (Осно</option></Select><Arrow w={5} />
                </Combo>
                <Combo $w={56}>
                  <Select aria-label="Размер шрифта"><option>11</option></Select><Arrow w={5} />
                </Combo>
                <Tool aria-label="Увеличить размер"><ResizeA /></Tool>
                <Tool $w={22} aria-label="Уменьшить размер"><ResizeA down /></Tool>
                <Divider />
                <Tool $w={30} aria-label="Регистр"><Inline><Glyph $size={13}>Aa</Glyph><Arrow w={5} /></Inline></Tool>
                <Divider $w={10} />
                <Tool aria-label="Очистить формат"><Eraser /></Tool>
              </Row>
              <Row>
                <Tool $w={23}><Glyph>Ж</Glyph></Tool>
                <Tool $w={23}><Glyph $italic>К</Glyph></Tool>
                <Tool $w={23}><Glyph $line="underline">Ч</Glyph></Tool>
                <Menu label="Вид подчёркивания" />
                <Tool><Glyph $size={12} $line="line-through">abc</Glyph></Tool>
                <Tool><Script>x<small>2</small></Script></Tool>
                <Tool><Script $up>x<small>2</small></Script></Tool>
                <Divider />
                <Tool $w={31} aria-label="Текстовые эффекты"><GlowA /><Arrow w={5} /></Tool>
                <Tool $w={23} aria-label="Выделение цветом"><Highlighter /></Tool>
                <Menu label="Цвет выделения" />
                <Tool $w={23} aria-label="Цвет текста"><FontColor /></Tool>
                <Menu label="Выбор цвета текста" />
              </Row>
            </Rows>
          </GroupBody>
          <Footer title="Шрифт" />
        </Group>

        <Group $w={228} $tinted>
          <GroupBody>
            <Rows>
              <Row>
                <Tool $w={23} aria-label="Маркеры"><Bullets /></Tool>
                <Menu label="Вид маркеров" />
                <Tool $w={23} aria-label="Нумерация"><Numbering /></Tool>
                <Menu label="Вид нумерации" />
                <Tool $w={30} aria-label="Многоуровневый список"><Inline><Multilevel /><Arrow w={5} /></Inline></Tool>
                <Divider $w={10} />
                <Tool $w={22} aria-label="Уменьшить отступ"><Indent /></Tool>
                <Tool $w={22} aria-label="Увеличить отступ"><Indent inward /></Tool>
                <Divider />
                <Tool aria-label="Сортировка"><Sort /></Tool>
                <Divider $w={10} />
                <Tool aria-label="Все знаки"><Pilcrow /></Tool>
              </Row>
              <Row>
                <ToggleTool $w={23} $on aria-label="По левому краю"><Align kind="left" /></ToggleTool>
                <ToggleTool $w={23} aria-label="По центру"><Align kind="center" /></ToggleTool>
                <ToggleTool $w={24} aria-label="По правому краю"><Align kind="right" /></ToggleTool>
                <ToggleTool $w={23} aria-label="По ширине"><Align kind="full" /></ToggleTool>
                <Divider $w={10} />
                <Tool $w={30} aria-label="Интервал"><Inline><Spacing /><Arrow w={5} /></Inline></Tool>
                <Divider $w={10} />
                <Tool $w={23} aria-label="Заливка"><Bucket /></Tool>
                <Menu label="Цвет заливки" />
                <Tool $w={23} aria-label="Границы"><Borders /></Tool>
                <Menu label="Вид границ" />
              </Row>
            </Rows>
          </GroupBody>
          <Footer title="Абзац" />
        </Group>

        <Group $w={447}>
          <GroupBody $left={6}>
            <Gallery>
              {STYLES.map((s, i) => (
                <StyleCard key={i} $on={i === 0}>
                  <Preview><Sample $size={s.size} $color={s.color} $serif={s.serif} $bold={s.bold}>{s.sample}</Sample></Preview>
                  <StyleName>{s.name}</StyleName>
                </StyleCard>
              ))}
              <GalleryScroll>
                <GalleryButton aria-label="Вверх"><SmallUp /></GalleryButton>
                <GalleryButton aria-label="Вниз"><Arrow /></GalleryButton>
                <GalleryButton aria-label="Дополнительно"><Customize /></GalleryButton>
              </GalleryScroll>
            </Gallery>
            <BigButton>
              <BigIcon><ChangeStyles /></BigIcon>
              <span>Изменить</span>
              <Inline>стили<Arrow /></Inline>
            </BigButton>
          </GroupBody>
          <Footer title="Стили" />
        </Group>

        <Group $w={95} $tinted>
          <GroupBody $left={7}>
            <SmallColumn>
              <SmallButton><Binoculars />Найти<Arrow /></SmallButton>
              <SmallButton><Replace />Заменить</SmallButton>
              <SmallButton><Cursor />Выделить<Arrow w={5} /></SmallButton>
            </SmallColumn>
          </GroupBody>
          <Footer title="Редактирование" launcher={false} />
        </Group>
      </Ribbon>

      <Workspace>
        <LeftRail>
          <TabStop aria-label="Позиция табуляции">
            <span><svg width="6" height="6" viewBox="0 0 6 6"><path d="M1 0v5h5" fill="none" stroke="#333" strokeWidth="2" /></svg></span>
          </TabStop>
          <VRuler><VMarks>{marks(V_LABELS, true)}</VMarks></VRuler>
        </LeftRail>
        <Center>
          <HRuler>
            <TextSpan />
            <HMarks>{marks(H_LABELS, false)}</HMarks>
            <LeftIndent><IndentMarker /></LeftIndent>
            <RightIndent><RightMarker /></RightIndent>
          </HRuler>
          <TabStops>{range(13).map((n) => <i key={n} />)}</TabStops>
          <Page aria-label="Документ1" />
        </Center>
        <ScrollRail>
          <SplitHandle />
          <RailButton $boxed aria-label="Линейка"><RulerToggle /></RailButton>
          <RailButton aria-label="Прокрутить вверх"><Up /></RailButton>
          <Track><Thumb><Grip /></Thumb></Track>
          <RailButton aria-label="Прокрутить вниз"><Down /></RailButton>
          <RailButton $line aria-label="Предыдущая страница"><DoubleArrow /></RailButton>
          <RailButton aria-label="Объект перехода"><Ring /></RailButton>
          <RailButton aria-label="Следующая страница"><DoubleArrow down /></RailButton>
        </ScrollRail>
      </Workspace>

      <StatusBar>
        <StatusItem>Страница: 1 из 1</StatusItem>
        <StatusItem>Число слов: 0</StatusItem>
        <Tool $w={32} aria-label="Правописание"><Spell /></Tool>
        <StatusItem>русский</StatusItem>
        <ViewButtons>
          <ViewButton $w={19} $on aria-label="Разметка страницы"><ViewIcon kind="print" /></ViewButton>
          <ViewButton $w={18} aria-label="Режим чтения"><ViewIcon kind="read" /></ViewButton>
          <ViewButton $w={18} aria-label="Веб-документ"><ViewIcon kind="web" /></ViewButton>
          <ViewButton $w={18} aria-label="Структура"><ViewIcon kind="outline" /></ViewButton>
          <ViewButton $w={18} aria-label="Черновик"><ViewIcon kind="draft" /></ViewButton>
        </ViewButtons>
        <ZoomGroup>
          <ZoomValue>148%</ZoomValue>
          <ZoomButton aria-label="Уменьшить"><svg width="8" height="8" viewBox="0 0 8 8"><path d="M0 4h8" stroke="#4a4e55" strokeWidth="2" /></svg></ZoomButton>
          <ZoomSlider type="range" min={0} max={100} defaultValue={56} aria-label="Масштаб" />
          <ZoomButton aria-label="Увеличить"><svg width="8" height="8" viewBox="0 0 8 8"><path d="M0 4h8M4 0v8" stroke="#4a4e55" strokeWidth="2" /></svg></ZoomButton>
        </ZoomGroup>
      </StatusBar>

      <Taskbar>
        <StartButton aria-label="Пуск"><Orb /></StartButton>
        <TaskList>
          <TaskButton aria-label="Internet Explorer"><Internet /></TaskButton>
          <TaskButton $open aria-label="Проводник"><span><Explorer /></span></TaskButton>
          <TaskButton aria-label="Проигрыватель"><Media /></TaskButton>
          <TaskButton><ZyngaTile><Dog />zynga</ZyngaTile></TaskButton>
          <TaskButton $open $active aria-label="Microsoft Word"><span><WordBig /></span></TaskButton>
        </TaskList>
        <Tray>
          <Language>RU</Language>
          <Tool $w={24} aria-label="Скрытые значки"><Up color="#fff" /></Tool>
          <Tool $w={24} aria-label="Центр поддержки"><Flag /></Tool>
          <Tool $w={24} aria-label="Сеть"><Network /></Tool>
          <Tool $w={24} aria-label="Громкость"><Speaker /></Tool>
          <Clock dateTime="2012-06-28T21:08">21:08<br />28.06.2012</Clock>
        </Tray>
        <ShowDesktop aria-label="Показать рабочий стол" />
      </Taskbar>
    </Window>
  );
}
